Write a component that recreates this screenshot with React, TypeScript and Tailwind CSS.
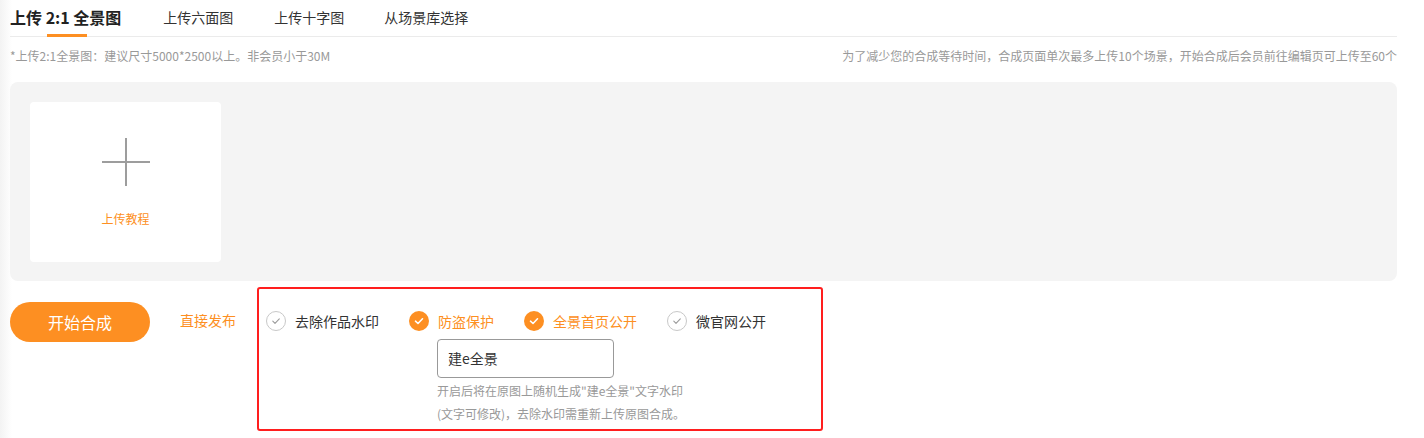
import React from "react";

const Check = ({ on }: { on: boolean }) =>
  on ? (
    <span className="w-5 h-5 rounded-full bg-[#fd8f22] flex items-center justify-center shrink-0">
      <svg width="12" height="12" viewBox="0 0 12 12" fill="none">
        <path d="M2.5 6.2 L5 8.5 L9.5 3.8" stroke="#fff" strokeWidth="1.6" strokeLinecap="round" strokeLinejoin="round" />
      </svg>
    </span>
  ) : (
    <span className="w-5 h-5 rounded-full border border-[#c8c8c8] bg-white flex items-center justify-center shrink-0">
      <svg width="12" height="12" viewBox="0 0 12 12" fill="none">
        <path d="M2.8 6.2 L5 8.3 L9.3 3.9" stroke="#9a9a9a" strokeWidth="1.1" strokeLinecap="round" strokeLinejoin="round" />
      </svg>
    </span>
  );

export default function App() {
  const font = { fontFamily: '"Noto Sans CJK SC", "Noto Sans", sans-serif' };
  return (
    <div className="relative w-[1424px] h-[438px] bg-white overflow-hidden text-[#333]" style={font}>
      <div className="absolute left-0 top-0 h-full w-[12px] bg-gradient-to-r from-[#f3f3f3] to-white" />
      <div className="relative pl-[10px] w-[1397px]">
        {/* tabs */}
        <div className="flex items-end h-[37px] border-b border-[#ebebeb]">
          <div className="relative h-full flex items-center pr-[42px]">
            <span className="text-[16px] font-bold leading-none text-[#222] -mt-[3px]">上传 2:1 全景图</span>
            <span className="absolute left-[37px] bottom-[-1px] w-[40px] h-[3px] bg-[#fd8f22]" />
          </div>
          <div className="h-full flex items-center pr-[41px]">
            <span className="text-[14px] leading-none -mt-[3px]">上传六面图</span>
          </div>
          <div className="h-full flex items-center pr-[40px]">
            <span className="text-[14px] leading-none -mt-[3px]">上传十字图</span>
          </div>
          <div className="h-full flex items-center">
            <span className="text-[14px] leading-none -mt-[3px]">从场景库选择</span>
          </div>
        </div>
        {/* hint */}
        <div className="flex justify-between items-center h-[38px] text-[12px] text-[#999]">
          <span>*上传2:1全景图：建议尺寸5000*2500以上。非会员小于30M</span>
          <span>为了减少您的合成等待时间，合成页面单次最多上传10个场景，开始合成后会员前往编辑页可上传至60个</span>
        </div>
        {/* upload area */}
        <div className="mt-[7px] h-[199px] bg-[#f4f4f4] rounded-[8px] p-[20px]">
          <div className="w-[191px] h-[160px] bg-white rounded-[4px] flex flex-col items-center">
            <div className="relative w-[48px] h-[48px] mt-[36px]">
              <span className="absolute left-[23px] top-0 w-[2px] h-[48px] bg-[#9d9d9d]" />
              <span className="absolute top-[23px] left-0 h-[2px] w-[48px] bg-[#9d9d9d]" />
            </div>
            <span className="mt-[27px] text-[12px] text-[#fd8f22] leading-none">上传教程</span>
          </div>
        </div>
        {/* bottom */}
        <div className="flex items-start mt-[6px]">
          <button className="mt-[15px] w-[140px] h-[40px] rounded-full bg-[#fd8f22] text-white text-[16px]">开始合成</button>
          <span className="mt-[23px] ml-[30px] text-[14px] text-[#fd8f22] leading-[20px]">直接发布</span>
          <div className="ml-[21px] w-[566px] h-[144px] border-2 border-[#ff1e1e] rounded-[3px] pl-[7px] pt-[21px]">
            <div className="flex items-center h-[22px]">
              <Check on={false} />
              <span className="ml-[9px] text-[14px]">去除作品水印</span>
              <span className="ml-[30px]"><Check on={true} /></span>
              <span className="ml-[9px] text-[14px] text-[#fd8f22]">防盗保护</span>
              <span className="ml-[30px]"><Check on={true} /></span>
              <span className="ml-[9px] text-[14px] text-[#fd8f22]">全景首页公开</span>
              <span className="ml-[30px]"><Check on={false} /></span>
              <span className="ml-[9px] text-[14px]">微官网公开</span>
            </div>
            <div className="ml-[171px] mt-[7px]">
              <div className="w-[177px] h-[39px] border border-[#999] rounded-[4px] flex items-center pl-[10px] text-[14px]">建e全景</div>
              <div className="text-[12px] text-[#999] leading-[23px] mt-[1px]">
                <div>开启后将在原图上随机生成"建e全景"文字水印</div>
                <div>(文字可修改)，去除水印需重新上传原图合成。</div>
              </div>
            </div>
          </div>
        </div>
      </div>
    </div>
  );
}
